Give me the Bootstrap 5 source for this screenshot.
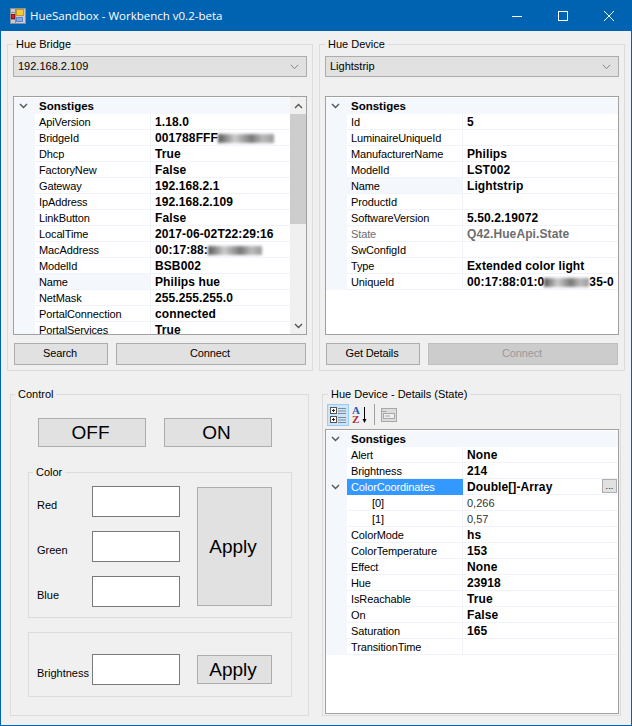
<!DOCTYPE html>
<html lang="en">
<head>
  <meta charset="UTF-8">
  <title>HueSandbox - Workbench v0.2-beta</title>
  <link href="https://cdn.jsdelivr.net/npm/bootstrap@5.3.0/dist/css/bootstrap.min.css" rel="stylesheet">
  <style>
    body { margin: 0; background: #f0f0f0; font: 11px/14px "Liberation Sans", Arial, sans-serif; color: #000; }
    .app-win { width: 632px; height: 726px; border: 1px solid #0063b1; border-top: 0; background: #f0f0f0; overflow: hidden; }
    .title-bar { height: 31px; margin: 0 -1px; background: #0063b1; color: #fff; font: 11.5px/14px "Open Sans", sans-serif; padding-left: 10px; }
    .title-bar .win-title { margin-left: 4px; }
    .win-btns { margin-left: auto; }
    .win-btn { width: 46px; height: 31px; display: flex; align-items: center; justify-content: center; }
    .client { padding: 6px 6px 0; }
    .group-box { margin: 0; padding: 0 5px 5px; border: 1px solid #dcdcdc; min-width: 0; }
    .group-box > legend { float: none; width: auto; margin: 0; padding: 0 3px; font-size: 11px; line-height: 14px; }
    .w-top { width: 306px; }
    .w-control { width: 299px; margin-left: 3px; padding: 0 4px 18px; }
    .w-details { width: 299px; margin-left: 13px; padding: 0 1px 0 2px; }
    .w-details > legend { margin-left: 3px; }
    .top-row { gap: 6px; margin-bottom: 16px; }
    .combo { height: 21px; margin-top: 5px; padding: 0 20px 0 4px; font-size: 11px; line-height: 19px; color: #000; border: 1px solid #adadad; border-radius: 0; background-color: #e1e1e1; background-image: url("data:image/svg+xml,%3csvg xmlns='http://www.w3.org/2000/svg' viewBox='0 0 16 16'%3e%3cpath fill='none' stroke='%23707070' stroke-width='1.2' d='M2.5 5.5 8 11l5.5-5.5'/%3e%3c/svg%3e"); background-size: 11px 11px; background-position: right 6px center; }
    .prop-grid { border: 1px solid #a0a0a0; background: #fff; margin-top: 19px; height: 239px; overflow: hidden; }
    .prop-body { padding-top: 1px; min-width: 0; }
    .prop-row { height: 16px; line-height: 17px; overflow: hidden; white-space: nowrap; }
    .prop-gut { width: 21px; flex: none; background: #f4f7fc; display: flex; align-items: center; justify-content: center; padding-right: 3px; }
    .prop-name { width: 116px; flex: none; padding-left: 4px; letter-spacing: -.12px; border-right: 1px solid #f0f3fa; border-bottom: 1px solid #f0f3fa; }
    .prop-val { flex: 1 1 0; min-width: 0; padding-left: 4px; font-size: 12px; letter-spacing: .1px; font-weight: 700; border-bottom: 1px solid #f0f3fa; overflow: hidden; }
    .prop-head { background: #f4f7fc; font-size: 11.5px; font-weight: 700; flex: 1 1 0; padding-left: 4px; }
    .sel-idle { background: #f4f7fc; }
    .sel-on { background: #3399ff; color: #fff; border-color: #3399ff; }
    .prop-child { padding-left: 25px; }
    .val-plain { font-size: 11px; letter-spacing: 0; font-weight: 400; color: #333; }
    .val-off { color: #6d6d6d; }
    .name-off { color: #6d6d6d; }
    .blur-bar { display: inline-block; height: 9px; vertical-align: -1px; filter: blur(1.5px); background: linear-gradient(90deg, #555, #ccc 30%, #777 60%, #bbb 80%, #999); }
    .scroll-col { width: 16px; flex: none; background: #f0f0f0; }
    .scroll-end { height: 17px; display: flex; align-items: center; justify-content: center; background: #f0f0f0; }
    .scroll-thumb { height: 110px; background: #cdcdcd; }
    .wf-btn { height: 22px; padding: 0 2px 2px 0; font-size: 11px; line-height: 19px; letter-spacing: -.12px; color: #000; background: #e1e1e1; border: 1px solid #adadad; border-radius: 0; }
    .wf-btn:disabled { background: #cccccc; border-color: #bfbfbf; color: #9a9a9a; opacity: 1; }
    .btn-row { margin: 8px 1px 0; gap: 8px; }
    .btn-a { width: 94px; }
    .btn-b { width: 190px; }
    .big-btn { padding: 0 3px 0 0; font-size: 19px; line-height: 24px; letter-spacing: 0; }
    .pow-row { margin-top: 17px; gap: 18px; padding-left: 23px; }
    .pow-btn { width: 108px; height: 29px; }
    .sub-box { margin: 18px 0 0 13px; width: 264px; padding: 0 19px 10px 4px; border: 1px solid #dcdcdc; }
    .sub-box > legend { float: none; width: auto; margin: 0; padding: 0 3px; font-size: 11px; line-height: 14px; }
    .color-grid { display: grid; grid-template-columns: 59px 88px 17px 75px; grid-template-rows: 31px 31px 31px; row-gap: 14px; margin-top: 7px; }
    .side-label { padding: 12px 0 0 4px; }
    .apply-tall { grid-column: 4; grid-row: 1 / span 3; height: 119px; margin-top: 1px; }
    .wf-input { width: 88px; height: 31px; padding: 0 4px; border: 1px solid #7a7a7a; border-radius: 0; background: #fff; font-size: 12px; }
    .bright-box { margin: 14px 0 0 13px; width: 264px; height: 65px; padding: 21px 19px 0 8px; border: 1px solid #dcdcdc; }
    .apply-low { width: 75px; height: 29px; margin-left: 17px; margin-top: 1px; padding-top: 1px; }
    .bright-label { width: 55px; padding-top: 12px; }
    .tool-row { height: 25px; margin-top: 3px; margin-bottom: 0; padding-left: 2px; }
    .tool-btn { width: 22px; height: 22px; display: flex; align-items: center; justify-content: center; border: 1px solid transparent; }
    .tool-btn.is-on { background: #cce4f7; border-color: #99cdf5; }
    .tool-sep { width: 1px; height: 21px; background: #a0a0a0; margin: 0 3px 0 3px; }
    .grid-tall { margin-top: 0; height: 285px; }
    .dots-btn { width: 15px; height: 14px; margin-left: auto; margin-right: 1px; background: #e1e1e1; border: 1px solid #adadad; font-size: 9px; line-height: 12px; text-align: center; font-weight: 400; }
  </style>
</head>
<body>
  <div class="app-win">
    <div class="title-bar d-flex align-items-center">
      <svg width="16" height="16" viewBox="0 0 16 16">
        <rect x="0.5" y="0.5" width="15" height="15" fill="#c6ccd4" stroke="#8a8f99"/>
        <path d="M0.5 4.5h5M5.5 0.5v15M0.5 11.5h5" stroke="#8a8f99"/>
        <rect x="6.5" y="1.5" width="7" height="6" fill="#f6c93a" stroke="#c79a1e"/>
        <rect x="1.5" y="6.5" width="3" height="4" fill="#d8262a" stroke="#8c1416"/>
        <rect x="6.5" y="9.5" width="6" height="4" fill="#86a8e6" stroke="#5f84cc"/>
      </svg>
      <span class="win-title">HueSandbox - Workbench v0.2-beta</span>
      <div class="win-btns d-flex">
        <div class="win-btn"><svg width="10" height="10" viewBox="0 0 10 10"><path d="M0 5.5h10" stroke="#fff"/></svg></div>
        <div class="win-btn"><svg width="10" height="10" viewBox="0 0 10 10"><rect x="0.5" y="0.5" width="9" height="9" fill="none" stroke="#fff"/></svg></div>
        <div class="win-btn"><svg width="10" height="10" viewBox="0 0 10 10"><path d="M0 0l10 10M10 0L0 10" stroke="#fff"/></svg></div>
      </div>
    </div>

    <div class="client">
      <div class="d-flex top-row">
        <fieldset class="group-box w-top">
          <legend>Hue Bridge</legend>
          <select class="form-select combo"><option>192.168.2.109</option></select>
          <div class="prop-grid d-flex">
            <div class="prop-body flex-grow-1">
              <div class="prop-row d-flex"><div class="prop-gut"><svg width="9" height="6" viewBox="0 0 9 6"><path d="M1 1l3.5 3.5L8 1" fill="none" stroke="#555" stroke-width="1.4"/></svg></div><div class="prop-head">Sonstiges</div></div>
              <div class="prop-row d-flex"><div class="prop-gut"></div><div class="prop-name">ApiVersion</div><div class="prop-val">1.18.0</div></div>
              <div class="prop-row d-flex"><div class="prop-gut"></div><div class="prop-name">BridgeId</div><div class="prop-val">001788FFF<span class="blur-bar" style="width:56px"></span></div></div>
              <div class="prop-row d-flex"><div class="prop-gut"></div><div class="prop-name">Dhcp</div><div class="prop-val">True</div></div>
              <div class="prop-row d-flex"><div class="prop-gut"></div><div class="prop-name">FactoryNew</div><div class="prop-val">False</div></div>
              <div class="prop-row d-flex"><div class="prop-gut"></div><div class="prop-name">Gateway</div><div class="prop-val">192.168.2.1</div></div>
              <div class="prop-row d-flex"><div class="prop-gut"></div><div class="prop-name">IpAddress</div><div class="prop-val">192.168.2.109</div></div>
              <div class="prop-row d-flex"><div class="prop-gut"></div><div class="prop-name">LinkButton</div><div class="prop-val">False</div></div>
              <div class="prop-row d-flex"><div class="prop-gut"></div><div class="prop-name">LocalTime</div><div class="prop-val">2017-06-02T22:29:16</div></div>
              <div class="prop-row d-flex"><div class="prop-gut"></div><div class="prop-name">MacAddress</div><div class="prop-val">00:17:88:<span class="blur-bar" style="width:54px"></span></div></div>
              <div class="prop-row d-flex"><div class="prop-gut"></div><div class="prop-name">ModelId</div><div class="prop-val">BSB002</div></div>
              <div class="prop-row d-flex"><div class="prop-gut"></div><div class="prop-name sel-idle">Name</div><div class="prop-val">Philips hue</div></div>
              <div class="prop-row d-flex"><div class="prop-gut"></div><div class="prop-name">NetMask</div><div class="prop-val">255.255.255.0</div></div>
              <div class="prop-row d-flex"><div class="prop-gut"></div><div class="prop-name">PortalConnection</div><div class="prop-val">connected</div></div>
              <div class="prop-row d-flex"><div class="prop-gut"></div><div class="prop-name">PortalServices</div><div class="prop-val">True</div></div>
            </div>
            <div class="scroll-col d-flex flex-column">
              <div class="scroll-end"><svg width="9" height="6" viewBox="0 0 9 6"><path d="M1 5l3.5-3.5L8 5" fill="none" stroke="#555" stroke-width="1.4"/></svg></div>
              <div class="scroll-thumb"></div>
              <div class="flex-grow-1"></div>
              <div class="scroll-end"><svg width="9" height="6" viewBox="0 0 9 6"><path d="M1 1l3.5 3.5L8 1" fill="none" stroke="#555" stroke-width="1.4"/></svg></div>
            </div>
          </div>
          <div class="d-flex btn-row">
            <button class="btn wf-btn btn-a">Search</button>
            <button class="btn wf-btn btn-b">Connect</button>
          </div>
        </fieldset>

        <fieldset class="group-box w-top">
          <legend>Hue Device</legend>
          <select class="form-select combo"><option>Lightstrip</option></select>
          <div class="prop-grid">
            <div class="prop-body">
              <div class="prop-row d-flex"><div class="prop-gut"><svg width="9" height="6" viewBox="0 0 9 6"><path d="M1 1l3.5 3.5L8 1" fill="none" stroke="#555" stroke-width="1.4"/></svg></div><div class="prop-head">Sonstiges</div></div>
              <div class="prop-row d-flex"><div class="prop-gut"></div><div class="prop-name">Id</div><div class="prop-val">5</div></div>
              <div class="prop-row d-flex"><div class="prop-gut"></div><div class="prop-name">LuminaireUniqueId</div><div class="prop-val"></div></div>
              <div class="prop-row d-flex"><div class="prop-gut"></div><div class="prop-name">ManufacturerName</div><div class="prop-val">Philips</div></div>
              <div class="prop-row d-flex"><div class="prop-gut"></div><div class="prop-name">ModelId</div><div class="prop-val">LST002</div></div>
              <div class="prop-row d-flex"><div class="prop-gut"></div><div class="prop-name sel-idle">Name</div><div class="prop-val">Lightstrip</div></div>
              <div class="prop-row d-flex"><div class="prop-gut"></div><div class="prop-name">ProductId</div><div class="prop-val"></div></div>
              <div class="prop-row d-flex"><div class="prop-gut"></div><div class="prop-name">SoftwareVersion</div><div class="prop-val">5.50.2.19072</div></div>
              <div class="prop-row d-flex"><div class="prop-gut"></div><div class="prop-name name-off">State</div><div class="prop-val val-off">Q42.HueApi.State</div></div>
              <div class="prop-row d-flex"><div class="prop-gut"></div><div class="prop-name">SwConfigId</div><div class="prop-val"></div></div>
              <div class="prop-row d-flex"><div class="prop-gut"></div><div class="prop-name">Type</div><div class="prop-val">Extended color light</div></div>
              <div class="prop-row d-flex"><div class="prop-gut"></div><div class="prop-name">UniqueId</div><div class="prop-val">00:17:88:01:0<span class="blur-bar" style="width:45px"></span>35-0</div></div>
            </div>
          </div>
          <div class="d-flex btn-row">
            <button class="btn wf-btn btn-a">Get Details</button>
            <button class="btn wf-btn btn-b" disabled>Connect</button>
          </div>
        </fieldset>
      </div>

      <div class="d-flex">
        <fieldset class="group-box w-control">
          <legend>Control</legend>
          <div class="d-flex pow-row">
            <button class="btn wf-btn big-btn pow-btn">OFF</button>
            <button class="btn wf-btn big-btn pow-btn">ON</button>
          </div>
          <fieldset class="sub-box">
            <legend>Color</legend>
            <div class="color-grid">
              <div class="side-label">Red</div>
              <input class="wf-input" type="text">
              <div></div>
              <button class="btn wf-btn big-btn apply-tall">Apply</button>
              <div class="side-label">Green</div>
              <input class="wf-input" type="text">
              <div></div>
              <div class="side-label">Blue</div>
              <input class="wf-input" type="text">
              <div></div>
            </div>
          </fieldset>
          <div class="bright-box d-flex align-items-start">
            <div class="bright-label">Brightness</div>
            <input class="wf-input" type="text">
            <button class="btn wf-btn big-btn apply-low">Apply</button>
          </div>
        </fieldset>

        <fieldset class="group-box w-details">
          <legend>Hue Device - Details (State)</legend>
          <div class="tool-row d-flex align-items-start">
            <div class="tool-btn is-on">
              <svg width="18" height="18" viewBox="0 0 18 18">
                <rect x="1.5" y="1.5" width="6" height="6" fill="#fff" stroke="#555"/><path d="M3 4.5h3M4.5 3v3" stroke="#222"/>
                <rect x="1.5" y="10.5" width="6" height="6" fill="#fff" stroke="#555"/><path d="M3 13.5h3M4.5 12v3" stroke="#222"/>
                <path d="M9 2.5h8M9 5h8M9 7.5h8M9 11.5h8M9 14h8M9 16.5h8" stroke="#7d8a99"/>
              </svg>
            </div>
            <div class="tool-btn">
              <svg width="20" height="20" viewBox="0 0 20 20">
                <text font-family="Liberation Serif, serif" font-weight="700" font-size="11"><tspan x="2" y="9" fill="#2a55b5">A</tspan><tspan x="2" y="18" fill="#a8323a">Z</tspan></text>
                <path d="M14.5 2v14" stroke="#000"/><path d="M12.5 14h4l-2 4z" fill="#000"/>
              </svg>
            </div>
            <div class="tool-sep"></div>
            <div class="tool-btn">
              <svg width="16" height="14" viewBox="0 0 16 14">
                <rect x="0.5" y="0.5" width="15" height="13" fill="#dcdcdc" stroke="#a8a8a8"/>
                <path d="M0.5 3.5h5" stroke="#a8a8a8"/><rect x="2.5" y="5.5" width="11" height="5" fill="#eee" stroke="#a8a8a8"/>
                <path d="M4 8h5" stroke="#a8a8a8"/>
              </svg>
            </div>
          </div>
          <div class="prop-grid grid-tall">
            <div class="prop-body">
              <div class="prop-row d-flex"><div class="prop-gut"><svg width="9" height="6" viewBox="0 0 9 6"><path d="M1 1l3.5 3.5L8 1" fill="none" stroke="#555" stroke-width="1.4"/></svg></div><div class="prop-head">Sonstiges</div></div>
              <div class="prop-row d-flex"><div class="prop-gut"></div><div class="prop-name">Alert</div><div class="prop-val">None</div></div>
              <div class="prop-row d-flex"><div class="prop-gut"></div><div class="prop-name">Brightness</div><div class="prop-val">214</div></div>
              <div class="prop-row d-flex"><div class="prop-gut"><svg width="9" height="6" viewBox="0 0 9 6"><path d="M1 1l3.5 3.5L8 1" fill="none" stroke="#555" stroke-width="1.4"/></svg></div><div class="prop-name sel-on">ColorCoordinates</div><div class="prop-val d-flex">Double[]-Array<div class="dots-btn">...</div></div></div>
              <div class="prop-row d-flex"><div class="prop-gut"></div><div class="prop-name prop-child">[0]</div><div class="prop-val val-plain">0,266</div></div>
              <div class="prop-row d-flex"><div class="prop-gut"></div><div class="prop-name prop-child">[1]</div><div class="prop-val val-plain">0,57</div></div>
              <div class="prop-row d-flex"><div class="prop-gut"></div><div class="prop-name">ColorMode</div><div class="prop-val">hs</div></div>
              <div class="prop-row d-flex"><div class="prop-gut"></div><div class="prop-name">ColorTemperature</div><div class="prop-val">153</div></div>
              <div class="prop-row d-flex"><div class="prop-gut"></div><div class="prop-name">Effect</div><div class="prop-val">None</div></div>
              <div class="prop-row d-flex"><div class="prop-gut"></div><div class="prop-name">Hue</div><div class="prop-val">23918</div></div>
              <div class="prop-row d-flex"><div class="prop-gut"></div><div class="prop-name">IsReachable</div><div class="prop-val">True</div></div>
              <div class="prop-row d-flex"><div class="prop-gut"></div><div class="prop-name">On</div><div class="prop-val">False</div></div>
              <div class="prop-row d-flex"><div class="prop-gut"></div><div class="prop-name">Saturation</div><div class="prop-val">165</div></div>
              <div class="prop-row d-flex"><div class="prop-gut"></div><div class="prop-name">TransitionTime</div><div class="prop-val"></div></div>
            </div>
          </div>
        </fieldset>
      </div>
    </div>
  </div>
  <script src="https://cdn.jsdelivr.net/npm/bootstrap@5.3.0/dist/js/bootstrap.bundle.min.js"></script>
</body>
</html>
